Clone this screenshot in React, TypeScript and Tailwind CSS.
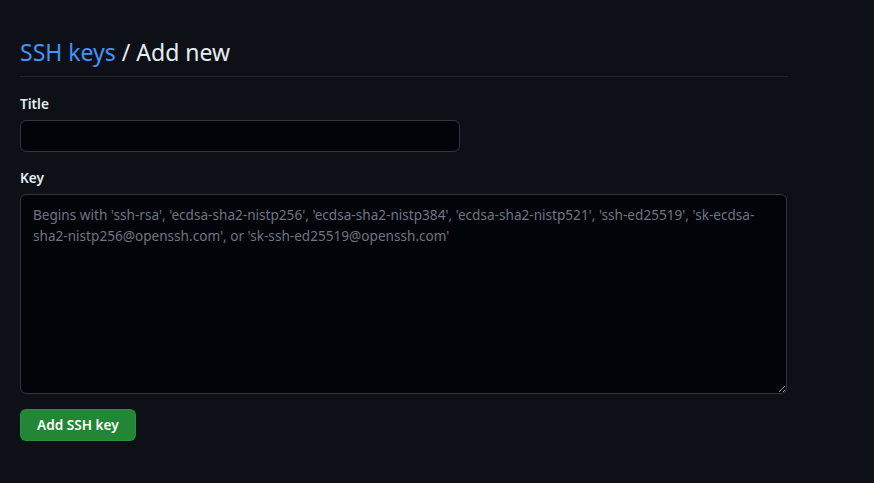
import React from "react";

export default function App() {
  return (
    <div
      className="min-h-[483px] w-full bg-[#0d1117] text-[#e6edf3]"
      style={{ fontFamily: '"Noto Sans", "Open Sans", sans-serif' }}
    >
      <div className="w-[788px] pl-5 pt-[37px]">
        <div className="border-b border-[#21262d] pb-[9px]">
          <h1 className="text-[23px] leading-[30px] font-normal">
            <a href="#" className="text-[#4493f8]">SSH keys</a>
            <span className="text-[#e6edf3]"> / Add new</span>
          </h1>
        </div>

        <form className="mt-[17px]" onSubmit={(e) => e.preventDefault()}>
          <label className="block text-[13.6px] font-semibold leading-5 mb-1.5">Title</label>
          <input
            type="text"
            className="block h-8 w-[440px] rounded-md border border-[#30363d] bg-[#010409] px-3 text-sm outline-none"
          />

          <label className="mt-4 block text-[13.6px] font-semibold leading-5 mb-1.5">Key</label>
          <textarea
            className="block h-[200px] w-[767px] resize-y rounded-md border border-[#30363d] bg-[#010409] px-3 py-[9px] text-[13.6px] leading-[21px] outline-none placeholder:text-[#6e7681]"
            placeholder="Begins with 'ssh-rsa', 'ecdsa-sha2-nistp256', 'ecdsa-sha2-nistp384', 'ecdsa-sha2-nistp521', 'ssh-ed25519', 'sk-ecdsa-sha2-nistp256@openssh.com', or 'sk-ssh-ed25519@openssh.com'"
          />

          <button
            type="submit"
            className="mt-[15px] h-8 rounded-md border border-[#2ea043]/40 bg-[#238636] px-4 text-[13.6px] font-semibold text-white"
          >
            Add SSH key
          </button>
        </form>
      </div>
    </div>
  );
}
